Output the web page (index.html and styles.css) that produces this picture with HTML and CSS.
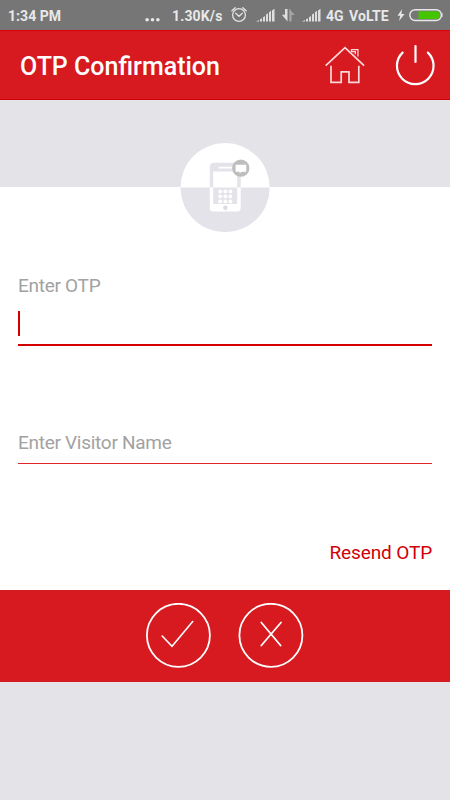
FILE: index.html
```html
<!DOCTYPE html>
<html lang="en">
<head>
<meta charset="utf-8">
<title>OTP Confirmation</title>
<link rel="stylesheet" href="styles.css">
</head>
<body>
<div class="screen">
  <div class="status">
    <span class="time">1:34 PM</span>
    <svg class="dots" width="16" height="30" fill="#e8e8e8"><circle cx="2.1" cy="19.8" r="1.8"/><circle cx="7.5" cy="19.8" r="1.8"/><circle cx="12.9" cy="19.8" r="1.8"/></svg>
    <span class="speed">1.30K/s</span>
    <svg class="alarm" width="18" height="30" fill="none" stroke="#e3e3e3" stroke-width="1.3" stroke-linecap="round"><circle cx="8" cy="15" r="6.4"/><path d="M.9 10.8 4.2 7.8M15.2 10.8 11.8 7.8M4.7 13.3 8 16.3 11.3 13.3"/></svg>
    <svg class="signal" width="20" height="30" fill="#dedede"><path d="M0 21.5 3 20V21.5ZM4 19.3 6 18.2V21.5H4ZM7 17.2 9 16.1V21.5H7ZM10 14.6 12 13.2V21.5H10ZM13 12.2 15 10.7V21.5H13ZM16 10.5 18.5 8.7V21.5H16Z"/></svg>
    <svg class="arrows" width="15" height="30"><path d="M6.5 9V21.5L.9 14.8H4V9Z" fill="#dedede"/><path d="M8.2 21.5V8.5L13.8 15H10.6V21.5Z" fill="#a4a4a4"/></svg>
    <svg class="signal" width="20" height="30" fill="#dedede"><path d="M0 21.5 3 20V21.5ZM4 19.3 6 18.2V21.5H4ZM7 17.2 9 16.1V21.5H7ZM10 14.6 12 13.2V21.5H10ZM13 12.2 15 10.7V21.5H13ZM16 10.5 18.5 8.7V21.5H16Z"/></svg>
    <span class="network">4G</span>
    <span class="volte">VoLTE</span>
    <svg class="bolt" width="8" height="30" fill="#e8e8e8"><path d="M5 9.2 .5 15.8H3.3L2 21 7.6 13.9H4.4Z"/></svg>
    <svg class="battery" width="34" height="30"><rect x=".8" y="9.7" width="31.6" height="10.8" rx="5.4" fill="none" stroke="#e8e8e8" stroke-width="1.4"/><path d="M9.5 11.2H27A3.9 3.9 0 0 1 27 19H9.5Z" fill="#45c400"/><path d="M33 13V17" stroke="#e8e8e8"/></svg>
  </div>
  <header class="header">
    <h1>OTP Confirmation</h1>
    <svg class="home" width="42" height="42" fill="none" stroke="#fbd9da" stroke-width="1.7"><path d="M1.7 21.6 21 3.6 40.1 21.6"/><path d="M27.5 5.7H33.9V12.5M27.5 5.1V7.6H31.3V10.2" stroke-width="1.3"/><path d="M7 21.8V38.4H17.2V27.8H25V38.4H34.8V21.8"/></svg>
    <svg class="power" width="42" height="42" fill="none" stroke="#fff" stroke-width="2.2" stroke-linecap="round"><path d="M21.5 2V18M8.6 8.6A18.3 18.3 0 1 0 33.9 8.6"/></svg>
  </header>
  <div class="hero">
    <svg class="phone" width="90" height="91">
      <path d="M.5 45.6A44.6 44.6 0 0 1 89.7 45.6Z" fill="#fff"/>
      <path d="M.5 45.6A44.6 44.6 0 0 0 89.7 45.6Z" fill="#e4e3e9"/>
      <path d="M29.8 45.6V24.9Q29.8 20.8 33.9 20.8H56.6Q60.7 20.8 60.7 24.9V45.6H57.2V29.6H33.2V45.6Z" fill="#e4e3e9"/>
      <path d="M39.4 25.6H51.4" stroke="#fff" stroke-width="1.8" stroke-linecap="round"/>
      <path d="M29.8 45.6H33.2V61.9H57.2V45.6H60.7V66.1Q60.7 69.6 57.2 69.6H33.3Q29.8 69.6 29.8 66.1Z" fill="#fff"/>
      <g fill="#fff"><circle cx="40.2" cy="49.4" r="1.9"/><circle cx="45.3" cy="49.4" r="1.9"/><circle cx="50.4" cy="49.4" r="1.9"/><circle cx="40.2" cy="54.4" r="1.9"/><circle cx="45.3" cy="54.4" r="1.9"/><circle cx="50.4" cy="54.4" r="1.9"/><circle cx="40.2" cy="59.4" r="1.9"/><circle cx="45.3" cy="59.4" r="1.9"/><circle cx="50.4" cy="59.4" r="1.9"/></g>
      <circle cx="45.3" cy="65.8" r="2.2" fill="#dbdae0"/>
      <circle cx="60.8" cy="26.2" r="8.6" fill="#bebebe"/>
      <path d="M55.6 22.8H66.2V29.7H61.6L59.6 31.6V29.7H55.6Z" fill="#fff"/>
    </svg>
  </div>
  <main class="form">
    <div class="field otp"><label>Enter OTP</label><div class="input"><span class="caret"></span></div></div>
    <div class="field visitor"><label>Enter Visitor Name</label></div>
    <a class="resend">Resend OTP</a>
  </main>
  <div class="actions">
    <svg width="66" height="66" fill="none" stroke="#fff"><circle cx="32.4" cy="32.3" r="31.5" stroke-width="1.8"/><path d="M16.2 33 26 43.3 46.7 18.5" stroke-width="1.6" stroke-linecap="round"/></svg>
    <svg width="66" height="66" fill="none" stroke="#fff"><circle cx="32.9" cy="32.3" r="31.5" stroke-width="1.8"/><path d="M23.3 19.5 42.6 42.5M43 19.5 23.3 42.5" stroke-width="1.8" stroke-linecap="round"/></svg>
  </div>
</div>
</body>
</html>
```
FILE: styles.css
```css
* { box-sizing: border-box; }
body { margin: 0; font-family: Roboto, "Liberation Sans", sans-serif; }
svg { display: block; flex: none; }
.screen { width: 450px; height: 800px; overflow: hidden; background: #e4e3e8; display: flex; flex-direction: column; }
.status {
  height: 30px; flex: none; background: #767676; color: #e8e8e8;
  display: grid; grid-template-columns: 137px 27px 59px 25px 25px 21px 24px 23px 48px 12px 34px;
  padding-left: 8px; font-size: 14px; font-weight: 700; line-height: 32px; white-space: nowrap;
}
.time { letter-spacing: .05px; }
.speed { letter-spacing: .15px; }
.volte { letter-spacing: .1px; }
.header {
  height: 70px; flex: none; background: #d71920; border-top: 1px solid #dd0006; border-bottom: 1px solid #d00009;
  display: flex; align-items: center; padding: 0 14px 0 20px;
}
.header h1 { margin: 4px auto 0 0; color: #fff; font-size: 25px; font-weight: 500; line-height: 30px; }
.power { margin-left: 28px; }
.hero { height: 87px; flex: none; display: flex; justify-content: center; padding-top: 42px; }
.phone { position: relative; z-index: 1; }
.form { height: 403px; flex: none; background: #fff; padding: 87px 18px 0; display: flex; flex-direction: column; }
.field label { display: block; color: #a2a2a2; font-size: 19px; line-height: 24px; letter-spacing: -.28px; }
.otp { height: 72px; border-bottom: 2px solid #d40000; }
.input { height: 26px; margin-top: 13px; }
.caret { display: block; width: 2px; height: 25px; background: #d40000; }
.visitor { height: 33px; margin-top: 85px; border-bottom: 1px solid #e0242a; }
.resend { align-self: flex-end; margin-top: 77px; color: #d0000a; font-size: 19px; line-height: 24px; letter-spacing: -.12px; }
.actions { height: 92px; flex: none; background: #d71920; display: flex; justify-content: center; gap: 26px; padding-top: 13px; }
```
